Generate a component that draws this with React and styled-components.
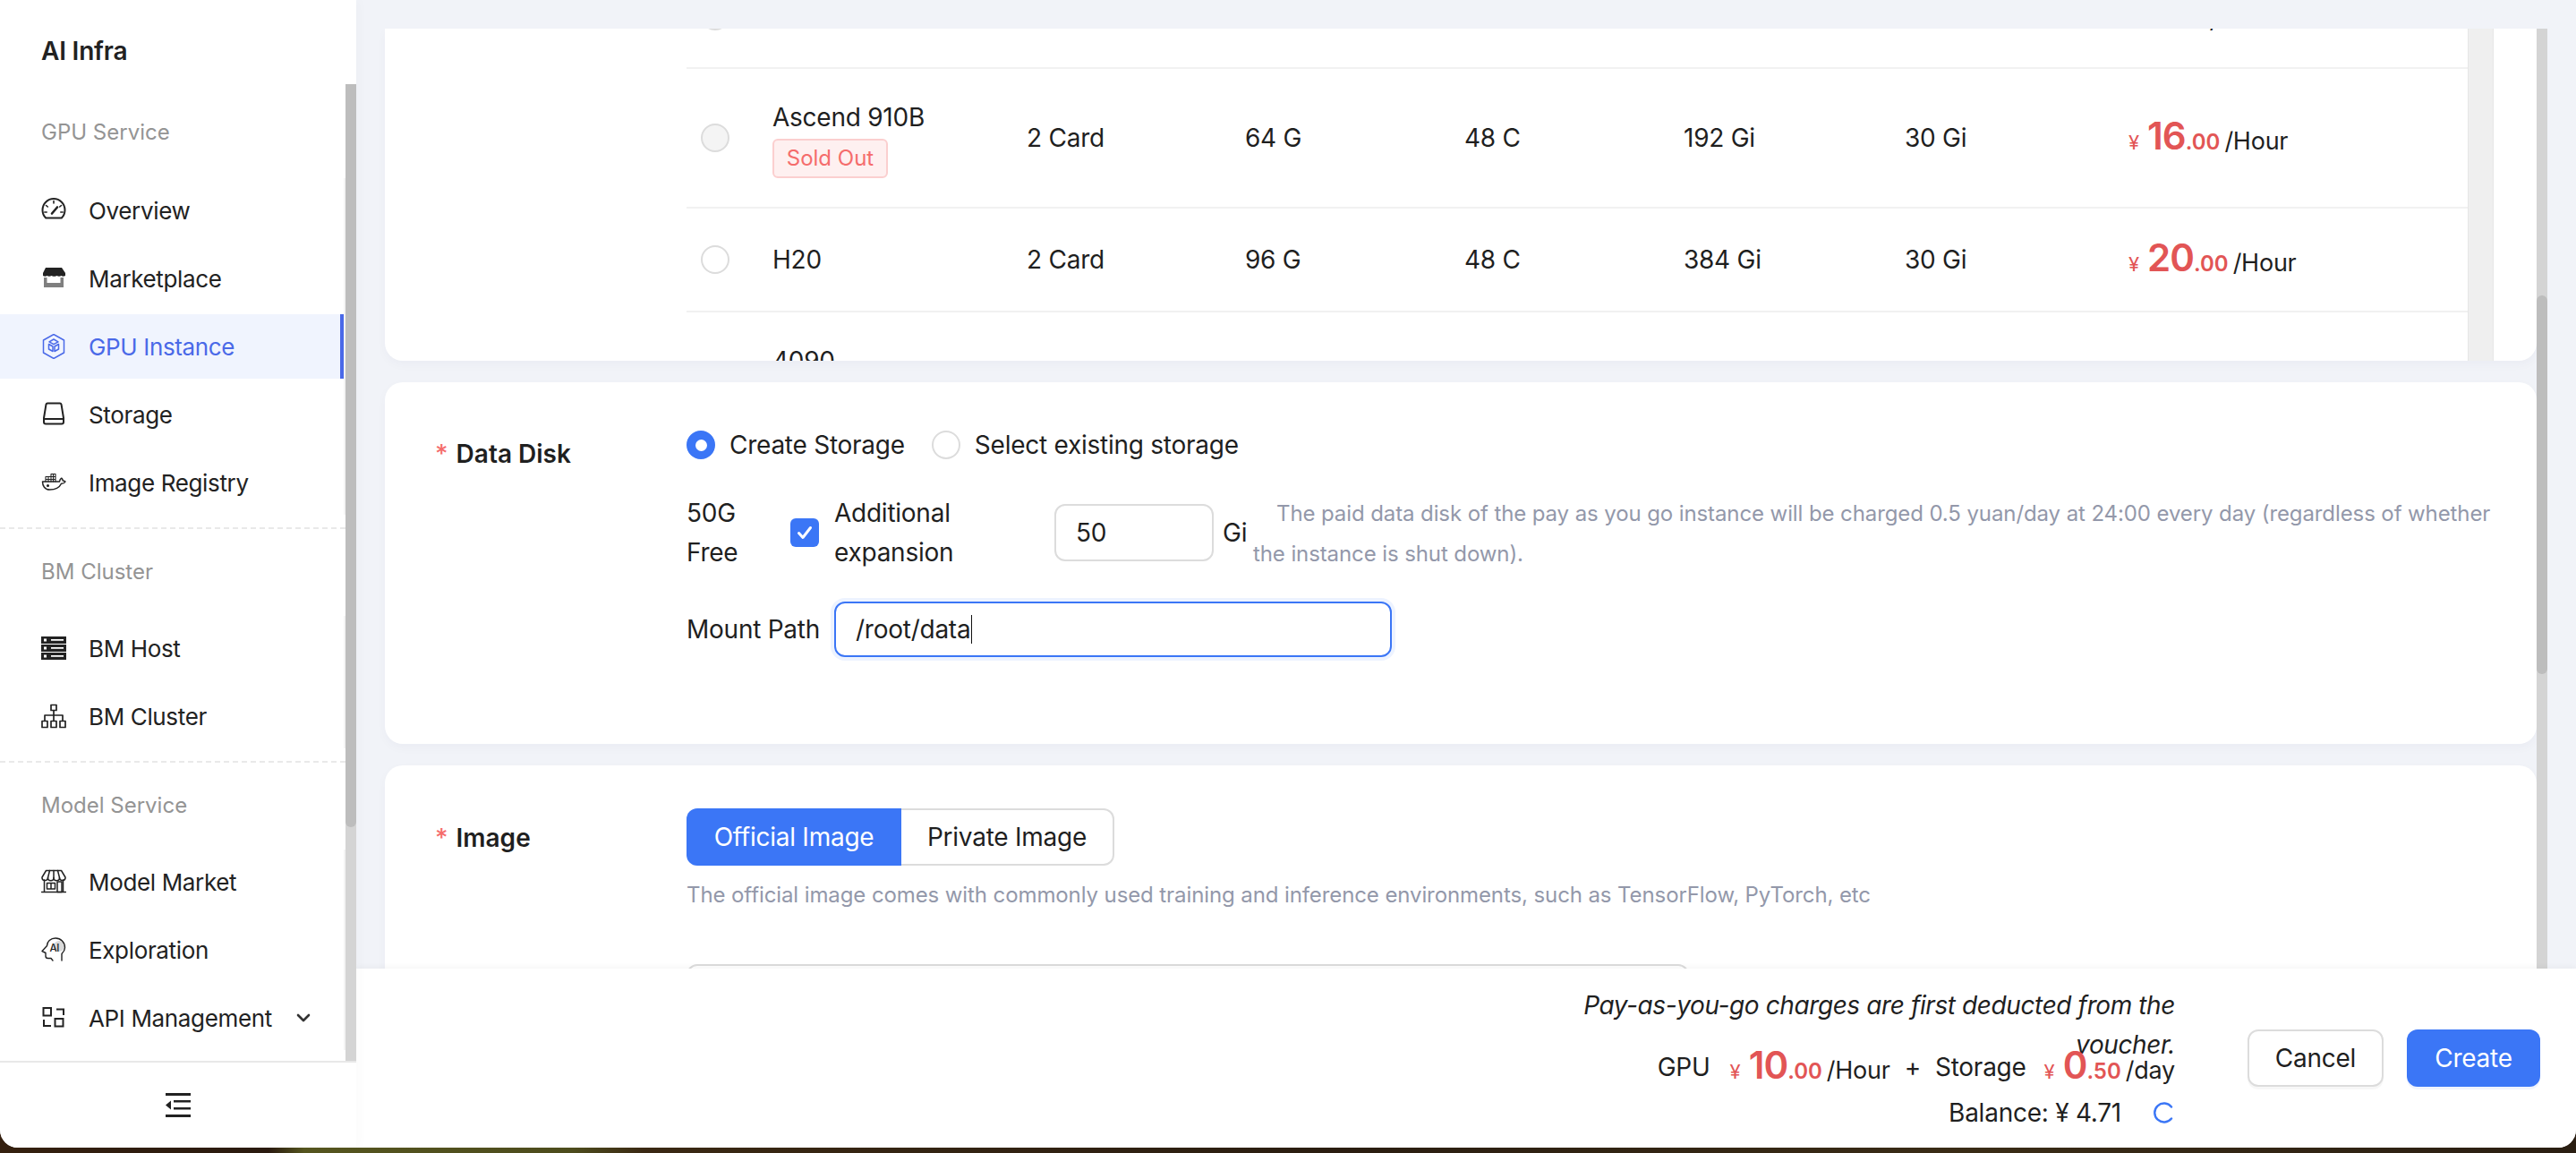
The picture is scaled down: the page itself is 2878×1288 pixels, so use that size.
import React from 'react';
import styled, { createGlobalStyle } from 'styled-components';

const GlobalStyle = createGlobalStyle`
  html, body {
    margin: 0;
    padding: 0;
    height: 1288px;
    overflow: hidden;
    background: linear-gradient(90deg, #35200f 0, #2a1a0f 300px, #55551f 340px, #4d4c1d 640px, #3a2813 720px, #2a1d10 1500px, #3a2c16 2200px, #2a1e12 100%);
  }
  * { box-sizing: border-box; }
  #root { font-family: Inter, "Noto Sans", sans-serif; color: #1f1f1f; }
`;

const Shell = styled.div`
  display: flex;
  width: 2878px;
  height: 1282px;
  border-radius: 0 0 20px 20px;
  overflow: hidden;
  background: #f1f3f8;
`;

// sidebar
const Sidebar = styled.aside`
  position: relative;
  z-index: 3;
  width: 398px;
  flex-shrink: 0;
  display: flex;
  flex-direction: column;
  background: #fff;
  box-shadow: 4px 0 12px rgba(0, 0, 0, 0.02);
`;

const Brand = styled.div`
  height: 94px;
  padding: 37px 0 0 46px;
  font-size: 28px;
  line-height: 40px;
  font-weight: 600;
  letter-spacing: -0.2px;
  color: #222;
`;

const SideScroll = styled.div`
  flex: 1;
  min-height: 0;
  display: flex;
`;

const NavColumn = styled.nav`
  width: 386px;
  overflow: hidden;
`;

const NavGroup = styled.div`
  padding: ${p => (p.$first ? '37px' : '31px')} 0 14px;
  border-bottom: ${p => (p.$last ? 'none' : '2px dashed #e9e9e9')};
`;

const GroupLabel = styled.div`
  height: 34px;
  line-height: 34px;
  padding-left: 46px;
  margin-bottom: ${p => (p.$first ? 34 : 32)}px;
  font-size: 24px;
  color: #949494;
`;

const NavList = styled.div`
  display: flex;
  flex-direction: column;
  gap: 4px;
  border-right: 2px solid #f4f4f4;
`;

const NavItem = styled.div`
  height: 72px;
  flex-shrink: 0;
  display: flex;
  align-items: center;
  gap: 25px;
  padding: 0 33px 0 46px;
  font-size: 26px;
  letter-spacing: -0.35px;
  white-space: nowrap;
  color: ${p => (p.$active ? '#4a69e8' : '#222')};
  background: ${p => (p.$active ? '#f0f4fe' : 'transparent')};
  border-right: 4px solid ${p => (p.$active ? '#4a69e8' : 'transparent')};
  svg.icon { flex-shrink: 0; width: 28px; height: 28px; }
  svg.chevron { margin-left: auto; }
`;

const SideRail = styled.div`
  width: 12px;
  background: #d4d4d4;
`;

const SideThumb = styled.div`
  height: 830px;
  background: #bdbdbd;
  border-radius: 0 0 6px 6px;
`;

const CollapseBar = styled.div`
  height: 97px;
  flex-shrink: 0;
  display: flex;
  align-items: center;
  justify-content: center;
  border-top: 2px solid #e8e8e8;
`;

// main column
const Main = styled.main`
  flex: 1;
  min-width: 0;
  display: flex;
  flex-direction: column;
  padding-top: 32px;
`;

const Body = styled.div`
  flex: 1;
  min-height: 0;
  display: flex;
  padding-right: 32px;
`;

const Pane = styled.div`
  flex: 1;
  min-width: 0;
  padding-left: 32px;
  display: flex;
  flex-direction: column;
  gap: 24px;
  overflow: hidden;
`;

const PageRail = styled.div`
  width: 12px;
  flex-shrink: 0;
  background: #d4d4d4;
`;

const PageThumb = styled.div`
  margin-top: 298px;
  height: 423px;
  background: #bdbdbd;
  border-radius: 6px;
`;

const Card = styled.section`
  flex-shrink: 0;
  background: #fff;
  border-radius: 20px;
  box-shadow: 0 4px 12px rgba(30, 40, 80, 0.03);
`;

const TableCard = styled(Card)`
  height: 371px;
  display: flex;
  padding: 0 48px 0 337px;
  border-radius: 0 0 20px 20px;
`;

const RowsViewport = styled.div`
  flex: 1;
  min-width: 0;
  overflow: hidden;
`;

const Rows = styled.div`
  margin-top: -72px;
`;

const Row = styled.div`
  display: grid;
  grid-template-columns: 96px 284px 244px 245px 245px 247px 250px 1fr;
  align-items: center;
  min-height: ${p => (p.$h ? p.$h : 116)}px;
  border-bottom: 2px solid #f1f1f1;
  font-size: 28px;
  letter-spacing: -0.25px;
`;

const TableRail = styled.div`
  width: 29px;
  flex-shrink: 0;
  background: #efefef;
  border-left: 1px solid #e6e6e6;
  border-right: 1px solid #e6e6e6;
`;

const Radio = styled.span`
  flex-shrink: 0;
  display: inline-flex;
  align-items: center;
  justify-content: center;
  width: 32px;
  height: 32px;
  border-radius: 50%;
  border: 2px solid ${p => (p.$checked ? '#3b76f6' : '#dcdcdc')};
  background: ${p => (p.$checked ? '#3b76f6' : p.$disabled ? '#f4f4f4' : '#fff')};
  &::after {
    content: '';
    display: ${p => (p.$checked ? 'block' : 'none')};
    width: 13px;
    height: 13px;
    border-radius: 50%;
    background: #fff;
  }
`;

const RadioCell = styled.div`
  padding-left: 16px;
  display: flex;
`;

const NameCell = styled.div`
  display: flex;
  flex-direction: column;
  align-items: flex-start;
  gap: 4px;
  line-height: 40px;
  padding: ${p => (p.$tagged ? '34px 0 32px' : '0')};
`;

const SoldOut = styled.span`
  height: 44px;
  width: 129px;
  display: flex;
  align-items: center;
  justify-content: center;
  font-size: 24px;
  letter-spacing: 0;
  color: #f56c6c;
  background: #fef0f0;
  border: 2px solid #fbcfcf;
  border-radius: 6px;
`;

const PriceWrap = styled.div`
  display: inline-flex;
  align-items: baseline;
  padding-bottom: 4px;
  letter-spacing: 0;
`;

const Yen = styled.span`
  font-size: 22px;
  color: #e25555;
  margin-right: 9px;
`;

const Big = styled.span`
  font-size: 42px;
  line-height: 48px;
  font-weight: 600;
  color: #e25555;
  letter-spacing: -1px;
`;

const Cents = styled.span`
  font-size: 24px;
  font-weight: 600;
  color: #e25555;
  margin-right: 5px;
`;

const Unit = styled.span`
  font-size: 27px;
  letter-spacing: -0.25px;
  color: #1f1f1f;
`;

const FormCard = styled(Card)`
  display: grid;
  grid-template-columns: 281px 1fr;
  padding: 48px 26px 0 56px;
  min-height: ${p => p.$min || 0}px;
`;

const FieldLabel = styled.div`
  display: flex;
  gap: 9px;
  padding-top: ${p => p.$top || 0}px;
  font-size: 28px;
  line-height: 44px;
  font-weight: 600;
  span { color: #f56c6c; font-weight: 500; }
`;

const Fields = styled.div`
  min-width: 0;
  display: flex;
  flex-direction: column;
  letter-spacing: -0.25px;
`;

const RadioRow = styled.div`
  height: 44px;
  display: flex;
  align-items: center;
  font-size: 28px;
`;

const RadioText = styled.span`
  margin: 0 30px 0 16px;
`;

const ExpandRow = styled.div`
  margin-top: 32px;
  display: flex;
  align-items: center;
  font-size: 28px;
  line-height: 44px;
`;

const FreeText = styled.div`
  width: 116px;
  flex-shrink: 0;
`;

const Checkbox = styled.span`
  width: 32px;
  height: 32px;
  flex-shrink: 0;
  display: flex;
  align-items: center;
  justify-content: center;
  margin-right: 17px;
  border-radius: 6px;
  background: #3b76f6;
`;

const ExpandText = styled.div`
  width: 246px;
  flex-shrink: 0;
`;

const SizeInput = styled.div`
  width: 178px;
  height: 64px;
  flex-shrink: 0;
  display: flex;
  align-items: center;
  padding-left: 22px;
  border: 2px solid #dcdcdc;
  border-radius: 12px;
`;

const GiText = styled.span`
  width: 44px;
  padding-left: 10px;
  flex-shrink: 0;
`;

const HelpInline = styled.div`
  flex: 1;
  min-width: 0;
  margin: 0 0 -2px;
  font-size: 24px;
  line-height: 45px;
  letter-spacing: -0.1px;
  text-indent: 26px;
  color: #9398aa;
`;

const MountRow = styled.div`
  margin-top: 33px;
  display: flex;
  align-items: center;
  font-size: 28px;
`;

const MountLabel = styled.span`
  width: 165px;
  flex-shrink: 0;
`;

const PathInput = styled.div`
  width: 623px;
  height: 62px;
  display: flex;
  align-items: center;
  padding-left: 22px;
  border: 2px solid #3b76f6;
  border-radius: 12px;
  box-shadow: 0 0 0 4px #edf3ff;
`;

const Caret = styled.span`
  width: 1px;
  height: 32px;
  margin-left: 1px;
  background: #111;
`;

const Tabs = styled.div`
  display: flex;
  width: 478px;
  height: 64px;
  font-size: 28px;
`;

const Tab = styled.div`
  flex: 0 0 ${p => (p.$active ? 240 : 238)}px;
  display: flex;
  align-items: center;
  justify-content: center;
  color: ${p => (p.$active ? '#fff' : '#1f1f1f')};
  background: ${p => (p.$active ? '#3b76f6' : '#fff')};
  border: ${p => (p.$active ? 'none' : '2px solid #dcdcdc')};
  border-left: none;
  border-radius: ${p => (p.$active ? '12px 0 0 12px' : '0 12px 12px 0')};
`;

const HelpLine = styled.div`
  margin-top: 11px;
  font-size: 24px;
  line-height: 44px;
  letter-spacing: -0.1px;
  color: #9398aa;
`;

const SelectBox = styled.div`
  margin-top: 55px;
  width: 1120px;
  height: 64px;
  border: 2px solid #dcdcdc;
  border-radius: 12px;
`;

// bottom bar
const Footer = styled.footer`
  position: relative;
  z-index: 2;
  height: 200px;
  flex-shrink: 0;
  display: flex;
  justify-content: flex-end;
  align-items: center;
  padding: 0 40px 0 0;
  background: #fff;
  box-shadow: 0 -2px 6px rgba(0, 0, 0, 0.04);
`;

const Summary = styled.div`
  align-self: flex-start;
  width: 680px;
  margin-right: 81px;
  padding-top: 19px;
  text-align: right;
  font-size: 28px;
  letter-spacing: -0.25px;
`;

const PayNote = styled.div`
  height: 66px;
  font-style: italic;
  line-height: 44px;
  letter-spacing: -0.4px;
`;

const CostRow = styled.div`
  height: 48px;
  padding-top: 2px;
  display: flex;
  justify-content: flex-end;
  align-items: center;
`;

const CostName = styled.span`
  margin-right: ${p => p.$gap}px;
`;

const Plus = styled.span`
  margin: 0 16px;
`;

const BalanceRow = styled.div`
  margin-top: 6px;
  height: 44px;
  display: flex;
  justify-content: flex-end;
  align-items: center;
  gap: 36px;
`;

const Buttons = styled.div`
  display: flex;
  gap: 26px;
`;

const Button = styled.button`
  width: ${p => (p.$primary ? 149 : 152)}px;
  height: 64px;
  font: inherit;
  font-size: 28px;
  letter-spacing: -0.25px;
  border-radius: 12px;
  color: ${p => (p.$primary ? '#fff' : '#1f1f1f')};
  background: ${p => (p.$primary ? '#3b76f6' : '#fff')};
  border: ${p => (p.$primary ? 'none' : '2px solid #dcdcdc')};
  box-shadow: 0 3px 0 ${p => (p.$primary ? 'rgba(59,118,246,0.08)' : 'rgba(0,0,0,0.03)')};
`;

const Icon = ({ children, ...rest }) => (
  <svg className="icon" viewBox="0 0 28 28" fill="none" stroke="currentColor" strokeWidth="1.8" strokeLinejoin="round" strokeLinecap="round" {...rest}>
    {children}
  </svg>
);

const icons = {
  overview: (
    <Icon>
      <path d="M5.2 22.5A12.5 12.5 0 1 1 22.8 22.5Z" strokeWidth="2" />
      <path d="M14 3.5V6M5.5 8.5l1.8 1.5M22.5 8.5l-1.8 1.5M3.8 16h2.400M24.200 16h-2.400" strokeWidth="1.6" />
      <path d="M12 17.5l6-7" strokeWidth="2.6" />
    </Icon>
  ),
  market: (
    <Icon stroke="none">
      <path d="M5 2h18l4 6v3c-1.500 1-3.500 1-4.500 0-1.500 1-3.500 1-5 0-1.200 1-4.800 1-6 0-1.500 1-3.500 1-5 0-1 1-3 1-4.500 0V8z" fill="#222" />
      <path d="M3 13h3.500v6h15v-6H25v11H3z" fill="#7f7f7f" />
    </Icon>
  ),
  gpu: (
    <Icon strokeWidth="1.5">
      <path d="M14 .5 25.500 7v14L14 27.500 2.500 21V7z" />
      <path d="M14 6l5 2.800-5 2.800-5-2.800zM8.500 11.500l4.500 2.500v5.500L8.500 17zM19.500 11.500 15 14v5.500l4.500-2.500z" />
    </Icon>
  ),
  storage: (
    <Icon strokeWidth="2">
      <path d="M7 1.500h14c.8 0 1.300.5 1.500 1.200L25 18v4.500a2 2 0 0 1-2 2H5a2 2 0 0 1-2-2V18L5.500 2.700C5.700 2 6.200 1.500 7 1.500z" />
      <path d="M3 19h22" />
    </Icon>
  ),
  docker: (
    <Icon strokeWidth="1.500">
      <path d="M1.500 13h19c.3-2 1.300-3.200 2.200-3.800 1 .8 1.500 1.800 1.500 2.800 1 0 2 .3 2.800 1-1 1.800-3 2.400-4.500 2.300C20.500 19.500 15.500 22 9.500 22 4 22 1.500 17.500 1.500 13z" />
      <path d="M5 10.500h11M5 7.500h11V13M5 7.500V13M8 7.500V13M11 4.500h5V13M11 4.500V13M13.500 4.500V13" strokeWidth="1.100" />
      <circle cx="7.500" cy="17.500" r=".8" />
    </Icon>
  ),
  host: (
    <Icon stroke="none">
      <path d="M0 1h28v8H0zM0 10h28v8H0zM0 19h28v8H0z" fill="#222" />
      <path d="M3 3.500h3v3H3zM3 12.500h3v3H3zM3 21.500h3v3H3zM11 4h14v1.800H11zM11 13h14v1.800H11zM11 22h14v1.800H11z" fill="#fff" />
    </Icon>
  ),
  cluster: (
    <Icon strokeWidth="1.700">
      <path d="M11 1.500h6v6h-6zM14 7.500V19M4 19v-6h20v6M1 19.500h6v7H1zM11 19.500h6v7h-6zM21 19.500h6v7h-6z" />
    </Icon>
  ),
  modelMarket: (
    <Icon strokeWidth="1.500">
      <path d="M5.500 1.500h17L27 9a3.100 3.100 0 0 1-6.500.5 3.100 3.100 0 0 1-6.500 0 3.100 3.100 0 0 1-6.500 0A3.100 3.100 0 0 1 1 9z" />
      <path d="M9.500 1.500 7.500 9.500M14 1.500v8M18.500 1.500l2 8M3.500 12v13.500M24.500 12v13.500M.5 25.500h27" />
      <path d="M6.500 15.500h9v6.500h-9zM11 15.500V22M18 14h5v11.500h-5z" />
    </Icon>
  ),
  exploration: (
    <Icon strokeWidth="1.400">
      <circle cx="20" cy="10" r="6" fill="#d9d9d9" stroke="none" />
      <path d="M16 1a10.500 10.500 0 0 1 10.500 10.500c0 3-1.500 5-3.500 7V26M16 1C10.500 1 6.500 5 6.500 9.500L1 15.500l4 2v3.500c0 1.500 1 2.500 2.500 2.500H11l2 2.500" />
      <text x="9.500" y="16" fontSize="11.500" fontWeight="500" fontFamily="Inter, sans-serif" fill="#222" stroke="none">AI</text>
    </Icon>
  ),
  api: (
    <Icon strokeWidth="2" strokeLinecap="butt" strokeLinejoin="miter">
      <path d="M2.500 3h8.500v8.500H2.500zM15.500 15h9v8.500h-9zM17 4.500h8v6.500M3 16v7h8" />
    </Icon>
  ),
};

const Chevron = () => (
  <svg className="chevron" width="16" height="10" viewBox="0 0 16 10" fill="none" stroke="#333" strokeWidth="2.600" strokeLinecap="round" strokeLinejoin="round">
    <path d="M2 2l6 6 6-6" />
  </svg>
);

const Collapse = () => (
  <svg width="28" height="27" viewBox="0 0 28 27" fill="#222">
    <path d="M0 0h28v3H0zM0 24h28v3H0zM9 8h19v2.500H9zM9 16h19v2.500H9zM6 8.500v10L0 13.500z" />
  </svg>
);

const Check = () => (
  <svg width="20" height="20" viewBox="0 0 20 20" fill="none" stroke="#fff" strokeWidth="3" strokeLinecap="round" strokeLinejoin="round">
    <path d="M3.500 10.500l4.500 5 8.500-11" />
  </svg>
);

const Spinner = () => (
  <svg width="24" height="24" viewBox="0 0 24 24" fill="none" stroke="#3b76f6" strokeWidth="2.400" strokeLinecap="round">
    <path d="M20 5.500A10.500 10.500 0 1 0 20 18.500" />
  </svg>
);

const groups = [
  {
    label: 'GPU Service',
    items: [
      { name: 'Overview', icon: 'overview' },
      { name: 'Marketplace', icon: 'market' },
      { name: 'GPU Instance', icon: 'gpu', active: true },
      { name: 'Storage', icon: 'storage' },
      { name: 'Image Registry', icon: 'docker' },
    ],
  },
  {
    label: 'BM Cluster',
    items: [
      { name: 'BM Host', icon: 'host' },
      { name: 'BM Cluster', icon: 'cluster' },
    ],
  },
  {
    label: 'Model Service',
    items: [
      { name: 'Model Market', icon: 'modelMarket' },
      { name: 'Exploration', icon: 'exploration' },
      { name: 'API Management', icon: 'api', more: true },
    ],
  },
];

const rows = [
  { name: 'Ascend 910', cards: '1 Card', mem: '32 G', cpu: '24 C', ram: '96 Gi', disk: '30 Gi', price: '8', h: 117, sold: false },
  { name: 'Ascend 910B', cards: '2 Card', mem: '64 G', cpu: '48 C', ram: '192 Gi', disk: '30 Gi', price: '16', sold: true },
  { name: 'H20', cards: '2 Card', mem: '96 G', cpu: '48 C', ram: '384 Gi', disk: '30 Gi', price: '20', h: 116, sold: false },
  { name: '4090', cards: '2 Card', mem: '48 G', cpu: '32 C', ram: '128 Gi', disk: '30 Gi', price: '24', sold: true },
];

const Price = ({ big, cents, unit }) => (
  <PriceWrap>
    <Yen>¥</Yen>
    <Big>{big}</Big>
    <Cents>{cents}</Cents>
    <Unit>{unit}</Unit>
  </PriceWrap>
);

export default function App() {
  return (
    <>
      <GlobalStyle />
      <Shell>
        <Sidebar>
          <Brand>AI Infra</Brand>
          <SideScroll>
            <NavColumn>
              {groups.map((g, i) => (
                <NavGroup key={g.label} $first={i === 0} $last={i === groups.length - 1}>
                  <GroupLabel $first={i === 0}>{g.label}</GroupLabel>
                  <NavList>
                    {g.items.map(item => (
                      <NavItem key={item.name} $active={item.active}>
                        {icons[item.icon]}
                        {item.name}
                        {item.more && <Chevron />}
                      </NavItem>
                    ))}
                  </NavList>
                </NavGroup>
              ))}
            </NavColumn>
            <SideRail>
              <SideThumb />
            </SideRail>
          </SideScroll>
          <CollapseBar>
            <Collapse />
          </CollapseBar>
        </Sidebar>

        <Main>
          <Body>
            <Pane>
              <TableCard>
                <RowsViewport>
                  <Rows>
                    {rows.map(r => (
                      <Row key={r.name} $h={r.h}>
                        <RadioCell>
                          <Radio $disabled={r.sold} />
                        </RadioCell>
                        <NameCell $tagged={r.sold}>
                          {r.name}
                          {r.sold && <SoldOut>Sold Out</SoldOut>}
                        </NameCell>
                        <div>{r.cards}</div>
                        <div>{r.mem}</div>
                        <div>{r.cpu}</div>
                        <div>{r.ram}</div>
                        <div>{r.disk}</div>
                        <Price big={r.price} cents=".00" unit="/Hour" />
                      </Row>
                    ))}
                  </Rows>
                </RowsViewport>
                <TableRail />
              </TableCard>

              <FormCard $min={404}>
                <FieldLabel $top={10}>
                  <span>*</span>Data Disk
                </FieldLabel>
                <Fields>
                  <RadioRow>
                    <Radio $checked />
                    <RadioText>Create Storage</RadioText>
                    <Radio />
                    <RadioText>Select existing storage</RadioText>
                  </RadioRow>
                  <ExpandRow>
                    <FreeText>50G Free</FreeText>
                    <Checkbox>
                      <Check />
                    </Checkbox>
                    <ExpandText>Additional expansion</ExpandText>
                    <SizeInput>50</SizeInput>
                    <GiText>Gi</GiText>
                    <HelpInline>
                      The paid data disk of the pay as you go instance will be charged 0.5 yuan/day at 24:00 every day (regardless of whether the instance is shut down).
                    </HelpInline>
                  </ExpandRow>
                  <MountRow>
                    <MountLabel>Mount Path</MountLabel>
                    <PathInput>
                      /root/data
                      <Caret />
                    </PathInput>
                  </MountRow>
                </Fields>
              </FormCard>

              <FormCard>
                <FieldLabel $top={11}>
                  <span>*</span>Image
                </FieldLabel>
                <Fields>
                  <Tabs>
                    <Tab $active>Official Image</Tab>
                    <Tab>Private Image</Tab>
                  </Tabs>
                  <HelpLine>The official image comes with commonly used training and inference environments, such as TensorFlow, PyTorch, etc</HelpLine>
                  <SelectBox />
                </Fields>
              </FormCard>
            </Pane>
            <PageRail>
              <PageThumb />
            </PageRail>
          </Body>

          <Footer>
            <Summary>
              <PayNote>Pay-as-you-go charges are first deducted from the voucher.</PayNote>
              <CostRow>
                <CostName $gap={22}>GPU</CostName>
                <Price big="10" cents=".00" unit="/Hour" />
                <Plus>+</Plus>
                <CostName $gap={20}>Storage</CostName>
                <Price big="0" cents=".50" unit="/day" />
              </CostRow>
              <BalanceRow>
                <span>Balance: ¥ 4.71</span>
                <Spinner />
              </BalanceRow>
            </Summary>
            <Buttons>
              <Button>Cancel</Button>
              <Button $primary>Create</Button>
            </Buttons>
          </Footer>
        </Main>
      </Shell>
    </>
  );
}
